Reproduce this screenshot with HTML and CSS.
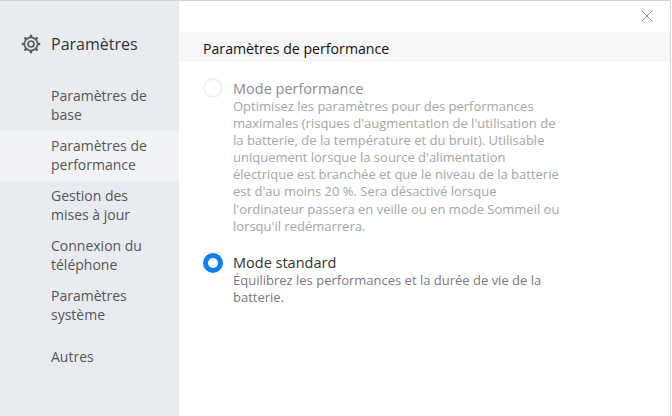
FILE: index.html
```html
<!DOCTYPE html>
<html lang="fr">
<head>
<meta charset="utf-8">
<title>Paramètres</title>
<link rel="stylesheet" href="styles.css">
</head>
<body>
<div class="window">
  <aside class="sidebar">
    <div class="brand">
      <svg class="gear" viewBox="0 0 20 20" width="20" height="20" fill="none" stroke="#55585d"><circle cx="10" cy="10" r="6.600" stroke-width="1.600"/><circle cx="10" cy="10" r="3" stroke-width="1.700"/><path stroke-width="2.400" d="M10 .8v2.600M10 16.600v2.600M.8 10h2.600M16.600 10h2.600M3.500 3.500l1.800 1.800M14.700 14.700l1.800 1.800M16.500 3.500l-1.800 1.800M5.300 14.700l-1.800 1.800"/></svg>
      <span>Paramètres</span>
    </div>
    <nav class="nav">
      <div class="item">Paramètres de base</div>
      <div class="item active">Paramètres de performance</div>
      <div class="item">Gestion des mises à jour</div>
      <div class="item">Connexion du téléphone</div>
      <div class="item">Paramètres système</div>
      <div class="item other">Autres</div>
    </nav>
  </aside>
  <main class="content">
    <div class="topbar"><svg class="close" viewBox="0 0 12 12" width="12" height="12" fill="none" stroke="#8a8f96" stroke-width="1"><path d="M.8.8l10.4 10.4M11.2.8L.8 11.200"/></svg></div>
    <h1 class="title">Paramètres de performance</h1>
    <div class="option disabled">
      <span class="radio"></span>
      <div class="text">
        <div class="name">Mode performance</div>
        <div class="desc">Optimisez les paramètres pour des performances maximales (risques d'augmentation de l'utilisation de la batterie, de la température et du bruit). Utilisable uniquement lorsque la source d'alimentation électrique est branchée et que le niveau de la batterie est d'au moins 20 %. Sera désactivé lorsque l'ordinateur passera en veille ou en mode Sommeil ou lorsqu'il redémarrera.</div>
      </div>
    </div>
    <div class="option">
      <span class="radio on"></span>
      <div class="text">
        <div class="name">Mode standard</div>
        <div class="desc">Équilibrez les performances et la durée de vie de la batterie.</div>
      </div>
    </div>
  </main>
</div>
</body>
</html>
```
FILE: styles.css
```css
* { box-sizing: border-box; }
html, body { margin: 0; height: 100%; }
body { font-family: "Open Sans", "Noto Sans", sans-serif; background: #fff; color: #333; overflow: hidden; }
.window { display: flex; width: 671px; height: 416px; border-top: 1px solid #cfd1d4; border-right: 1px solid #d4d6d9; }
.sidebar { width: 179px; background: #e8ecf1; flex: none; }
.brand { display: flex; align-items: center; gap: 10px; padding: 22px 0 0 21px; height: 64px; font-size: 16px; color: #333; }
.nav { padding-top: 16px; }
.item { padding: 5px 24px 0 51px; font-size: 14px; line-height: 19px; height: 50px; color: #555; }
.item.active { background: #f1f3f7; }
.item.other { padding-top: 16px; }
.content { flex: 1; min-width: 0; }
.topbar { height: 31px; display: flex; justify-content: flex-end; padding: 9px 17px 0 0; }
.title { margin: 0; height: 30px; background: #f7f7f7; font-size: 14.15px; font-weight: 400; line-height: 34px; padding-left: 24px; color: #111; }
.option { display: flex; gap: 10px; padding-left: 24px; width: 364px; box-sizing: content-box; }
.option.disabled { margin-top: 18px; margin-bottom: 19px; }
.option.disabled .name { color: #8c8c8c; }
.option.disabled .desc { color: #a6a6a6; }
.radio { width: 20px; height: 20px; border-radius: 50%; border: 2px solid #f0f0f0; flex: none; margin-top: -2px; }
.radio.on { border: 5px solid #0a80ff; background: #fff; margin-top: -1px; }
.name { font-size: 14.5px; line-height: 18px; }
.desc { font-size: 13px; line-height: 17.1px; color: #7a7a7a; }
```
